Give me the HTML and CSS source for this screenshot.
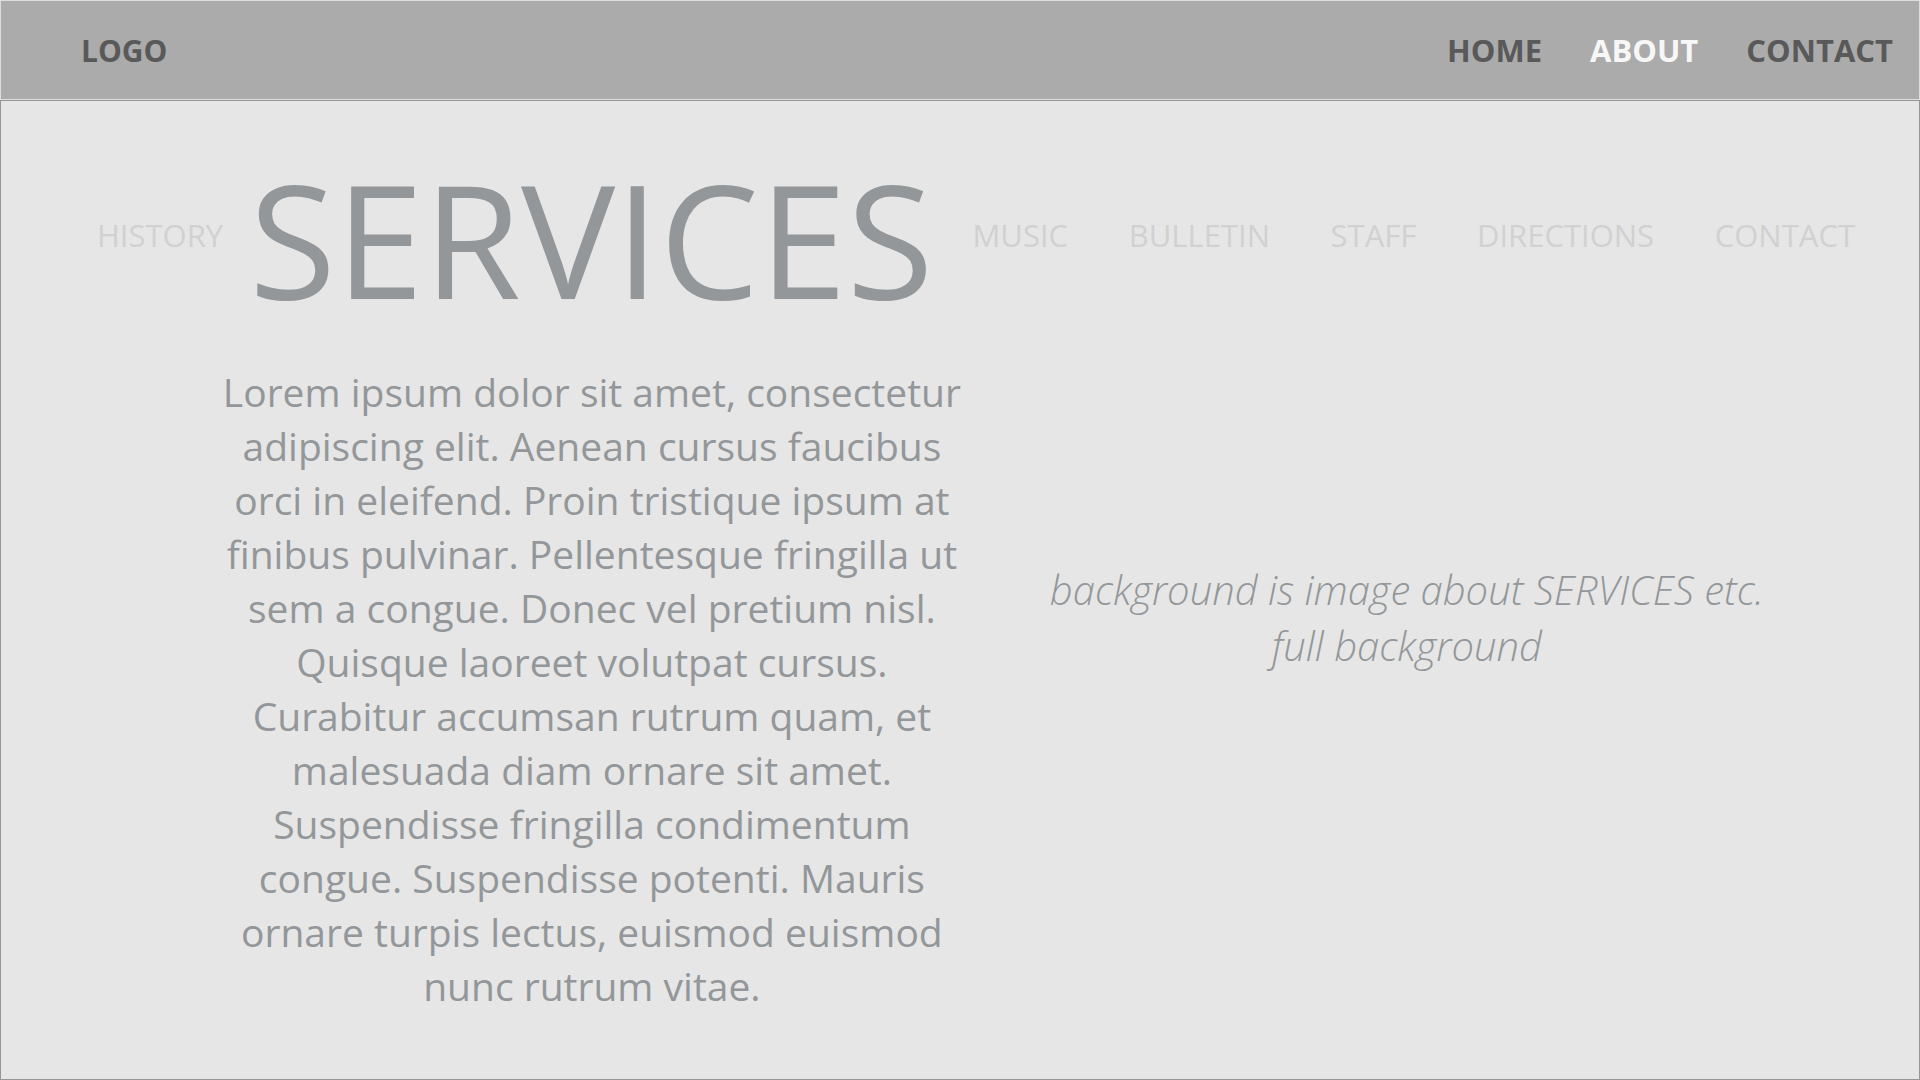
FILE: index.html
```html
<!DOCTYPE html>
<html lang="en">
<head>
<meta charset="utf-8">
<title>Services</title>
<link rel="stylesheet" href="styles.css">
</head>
<body>
<header class="topbar">
  <a class="logo" href="#">LOGO</a>
  <nav class="main-nav">
    <a href="#">HOME</a>
    <a class="active" href="#">ABOUT</a>
    <a href="#">CONTACT</a>
  </nav>
</header>
<main class="page">
  <nav class="sub-nav">
    <a href="#">HISTORY</a>
    <h1 class="current">SERVICES</h1>
    <div class="more-links">
      <a href="#">MUSIC</a>
      <a href="#">BULLETIN</a>
      <a href="#">STAFF</a>
      <a href="#">DIRECTIONS</a>
      <a href="#">CONTACT</a>
    </div>
  </nav>
  <div class="content">
    <p class="copy">Lorem ipsum dolor sit amet, consectetur<br>adipiscing elit. Aenean cursus faucibus<br>orci in eleifend. Proin tristique ipsum at<br>finibus pulvinar. Pellentesque fringilla ut<br>sem a congue. Donec vel pretium nisl.<br>Quisque laoreet volutpat cursus.<br>Curabitur accumsan rutrum quam, et<br>malesuada diam ornare sit amet.<br>Suspendisse fringilla condimentum<br>congue. Suspendisse potenti. Mauris<br>ornare turpis lectus, euismod euismod<br>nunc rutrum vitae.</p>
    <p class="note">background is image about SERVICES etc.<br>full background</p>
  </div>
</main>
</body>
</html>
```
FILE: styles.css
```css
* { box-sizing: border-box; }
body {
  margin: 0;
  min-height: 100vh;
  display: flex;
  flex-direction: column;
  background: #e6e6e6;
  color: #939799;
  font-family: "Open Sans", "Noto Sans", sans-serif;
}
a { color: inherit; text-decoration: none; }
h1, p { margin: 0; font-weight: 400; }
.topbar {
  display: flex;
  justify-content: space-between;
  align-items: center;
  min-height: 100px;
  padding: 0 26px 0 80px;
  border: 1px solid #dddddd;
  background: #ababab;
  color: #595959;
  font-size: 31px;
  font-weight: 700;
}
.logo { font-size: 30px; }
.main-nav { display: flex; gap: 48px; }
.active { color: #f7f7f7; }
.page {
  flex: 1;
  border: 1px solid #939799;
  padding: 47px 64px 64px 96px;
}
.sub-nav {
  display: flex;
  align-items: center;
  color: #d1d1d1;
  font-size: 31px;
}
.current {
  margin: 0 39px 0 26px;
  padding-top: 6px;
  color: #939799;
  font-size: 158px;
  line-height: 168px;
}
.more-links { flex: 1; display: flex; justify-content: space-between; }
.content {
  display: grid;
  grid-template-columns: 46fr 54fr;
  margin-top: 43px;
  padding: 0 8px 0 120px;
  text-align: center;
  white-space: nowrap;
}
.copy { font-size: 39px; line-height: 54px; }
.note {
  margin-top: 197px;
  font-size: 40px;
  font-weight: 300;
  font-style: italic;
  line-height: 56px;
}
```
